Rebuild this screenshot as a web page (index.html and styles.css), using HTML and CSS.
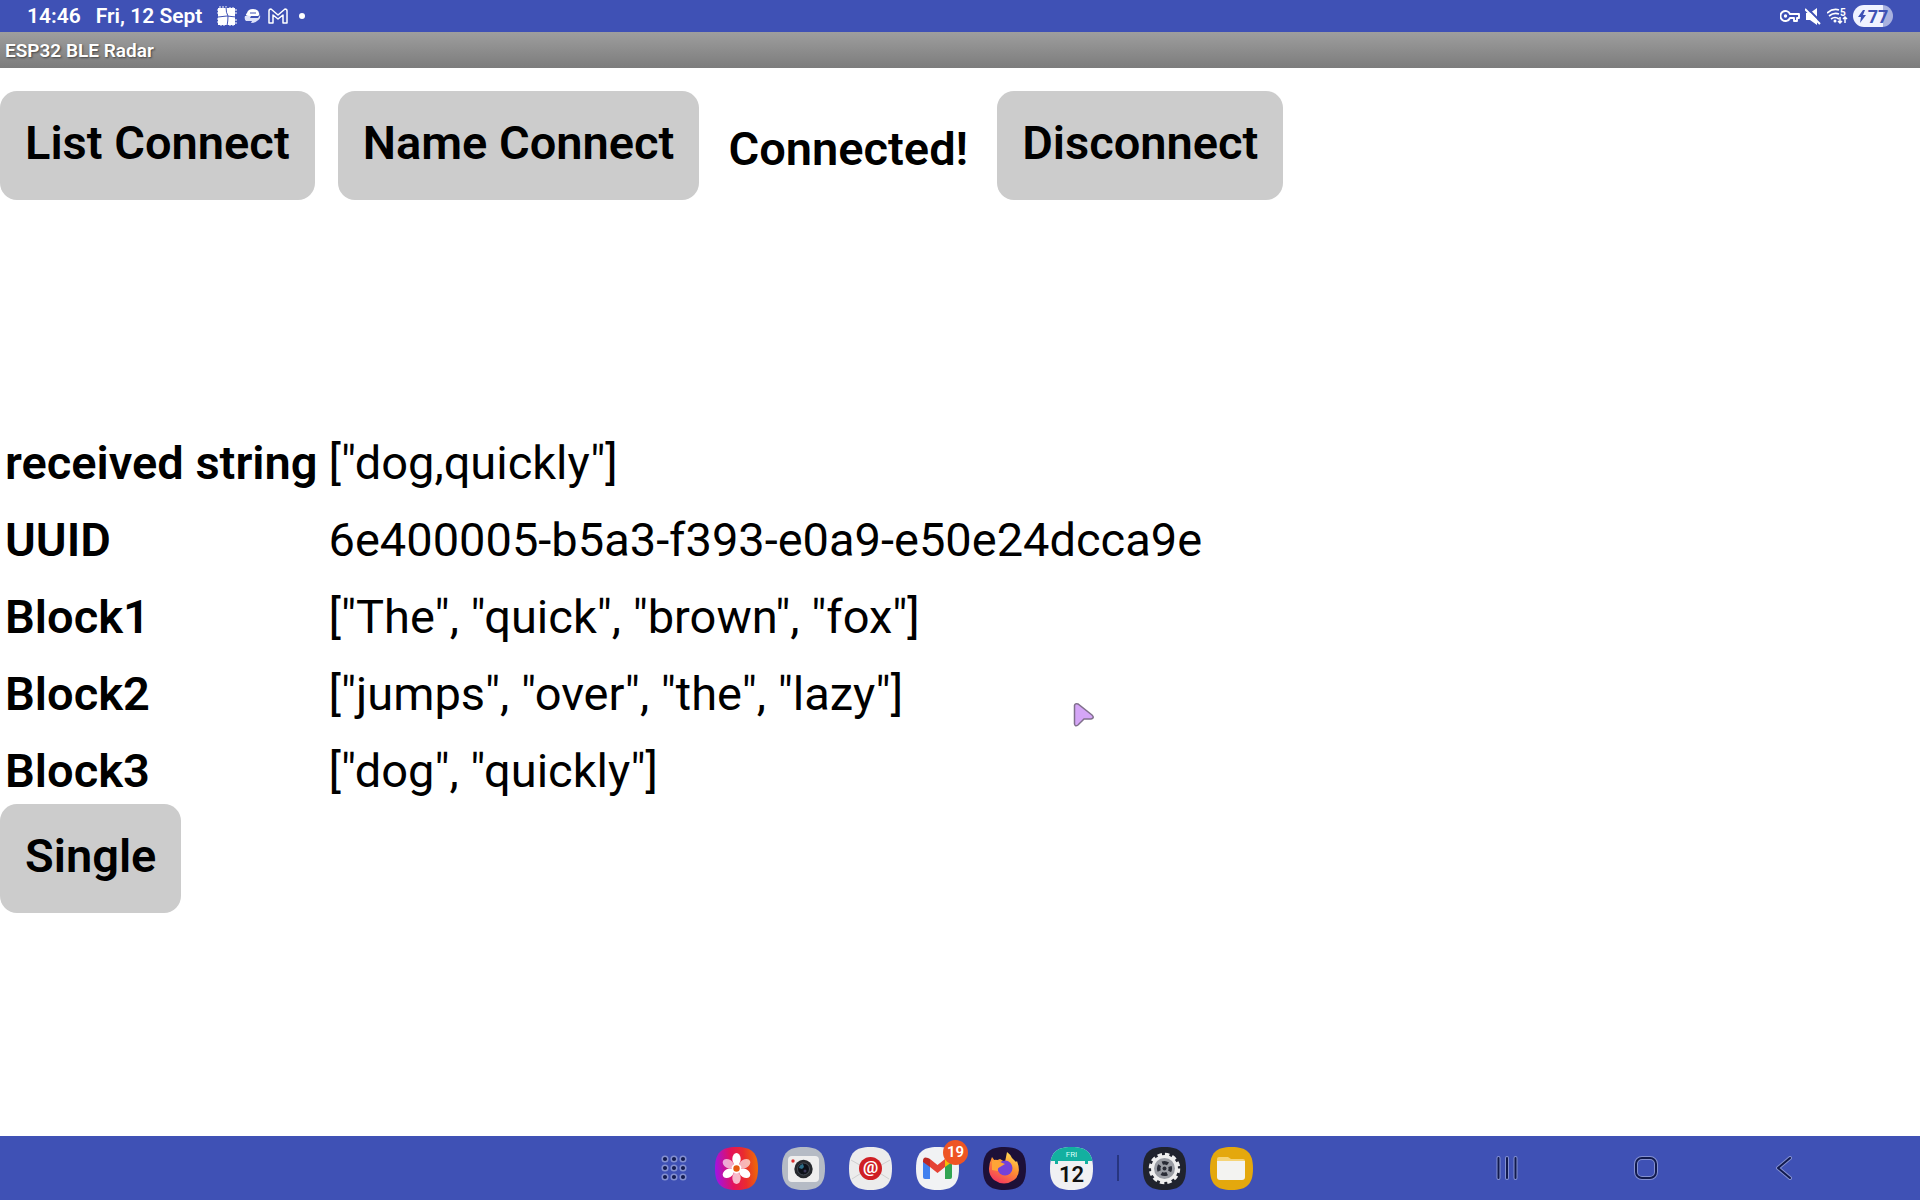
FILE: index.html
```html
<!DOCTYPE html>
<html lang="en">
<head>
  <meta charset="UTF-8">
  <title>ESP32 BLE Radar</title>
  <link rel="stylesheet" href="styles.css">
</head>
<body>

<header class="status-bar">
  <div class="status-left">
    <span class="clock">14:46</span>
    <span class="date">Fri, 12 Sept</span>
    <svg class="icon-grid" width="20" height="20" viewBox="0 0 20 20">
      <path d="M1 2h17v17H1z" fill="#fff"/>
      <path d="M3 0v3M6 0v3M9 0v3M13 1v2M16 1v2M0 4h2M0 7h2M0 13h2M0 16h2M18 4h2M18 7h2M18 14h2M18 17h2M4 18v2M7 18v2M13 18v2M16 18v2" stroke="#fff"/>
      <path d="M9 1q0 6 2 9 0 5-1 10M1 11l9-1 9 1" stroke="#3f51b5" fill="none"/>
    </svg>
    <svg class="icon-cloud" width="17" height="14" viewBox="0 0 17 14">
      <path d="M3 4Q4 0 9 0q5 0 6 4 1 2-1 3H5Q0 7 3 4z" fill="#fff"/>
      <path d="M1 7h6l-1 2h8l2-3q1 4-3 6-2 2-6 2l1-2H2Q0 10 1 7z" fill="#dfe3fa"/>
      <path d="M6 4h6M7 8h6" stroke="#3f51b5"/>
    </svg>
    <svg class="icon-mail" width="20" height="16" viewBox="0 0 20 16">
      <path d="M1 14V3q0-2 2-2l7 6 7-6q2 0 2 2v12h-4V7l-5 4-5-4v8H1z" fill="none" stroke="#fff" stroke-width="1.5" stroke-linejoin="round"/>
    </svg>
    <span class="dot"></span>
  </div>
  <div class="status-right">
    <svg width="20" height="12" viewBox="0 0 20 12">
      <path d="M10 4a5 5 0 1 0 0 4h4v3h3V8h2V4z" fill="none" stroke="#fff" stroke-width="1.9" stroke-linejoin="round"/>
      <circle cx="5.500" cy="6" r="1.700" fill="#fff"/>
    </svg>
    <svg width="17" height="17" viewBox="0 0 17 17">
      <path d="M1 5h4l7-5v17l-7-5H1z" fill="#fff"/>
      <path d="M2 0l15 15" stroke="#3f51b5" stroke-width="2"/>
      <path d="M0 1l15 15" stroke="#fff" stroke-width="2"/>
    </svg>
    <svg width="21" height="17" viewBox="0 0 21 17">
      <g fill="none" stroke="#fff" stroke-width="1.700">
        <path d="M0 5Q6 0 12 2M2 8q5-4 10-2M4 11q4-3 8 0"/>
        <path d="M13 9v6M11 13l2 2 2-2M18 15V9M16 11l2-2 2 2" stroke-width="1.500"/>
      </g>
      <circle cx="8" cy="13" r="1.500" fill="#fff"/>
      <text x="13" y="8" font-size="10" font-weight="700" fill="#fff">5</text>
    </svg>
    <span class="battery">
      <svg width="8" height="13" viewBox="0 0 8 13"><path d="M5 0L0 7h3l-1 6 6-8H5l2-5z" fill="#3f51b5"/></svg>
      77
    </span>
  </div>
</header>

<h1 class="title-bar">ESP32 BLE Radar</h1>

<main class="screen">
  <div class="connect-row">
    <button>List Connect</button>
    <button>Name Connect</button>
    <span class="state">Connected!</span>
    <button>Disconnect</button>
  </div>

  <table class="data">
    <tr><th scope="row">received string</th><td>["dog,quickly"]</td></tr>
    <tr><th scope="row">UUID</th><td>6e400005-b5a3-f393-e0a9-e50e24dcca9e</td></tr>
    <tr><th scope="row">Block1</th><td>["The", "quick", "brown", "fox"]</td></tr>
    <tr><th scope="row">Block2</th><td>["jumps", "over", "the", "lazy"]</td></tr>
    <tr><th scope="row">Block3</th><td>["dog", "quickly"]</td></tr>
  </table>

  <button>Single</button>

  <svg class="pointer" width="22" height="26" viewBox="0 0 22 26">
    <path d="M1.500 3.500Q2 1 5 2l14 11q3 3-1 4h-7l-6 6q-3 2-3.500-1z" fill="#d5a6f7" stroke="#80708c" stroke-width="1.500"/>
  </svg>
</main>

<footer class="taskbar">
  <nav class="dock" aria-label="Apps">
    <button class="all-apps" aria-label="All apps">
      <svg width="26" height="26" viewBox="0 0 26 26">
        <g fill="#141c50" stroke="#8490d0" stroke-width="1.500">
          <circle cx="4" cy="4" r="2.800"/><circle cx="13" cy="4" r="2.800"/><circle cx="22" cy="4" r="2.800"/>
          <circle cx="4" cy="13" r="2.800"/><circle cx="13" cy="13" r="2.800"/><circle cx="22" cy="13" r="2.800"/>
          <circle cx="4" cy="22" r="2.800"/><circle cx="13" cy="22" r="2.800"/><circle cx="22" cy="22" r="2.800"/>
        </g>
      </svg>
    </button>

    <button aria-label="Gallery">
      <svg width="43" height="43" viewBox="0 0 43 43">
        <defs>
          <linearGradient id="gallery" x1="0" y1=".6" x2="1" y2=".5">
            <stop offset="0" stop-color="#a013e8"/><stop offset=".4" stop-color="#e3125c"/>
            <stop offset=".7" stop-color="#ea2c2e"/><stop offset="1" stop-color="#ec6a08"/>
          </linearGradient>
          <path id="tile" d="M21.500 0C37 0 43 6 43 21.500S37 43 21.500 43 0 37 0 21.500 6 0 21.500 0z"/>
        </defs>
        <use href="#tile" fill="url(#gallery)"/>
        <g fill="#fff">
          <ellipse cx="21.500" cy="12" rx="4.200" ry="6"/>
          <ellipse cx="21.500" cy="12" rx="4.200" ry="6" transform="rotate(60 21.500 21.500)" opacity=".65"/>
          <ellipse cx="21.500" cy="12" rx="4.200" ry="6" transform="rotate(120 21.500 21.500)"/>
          <ellipse cx="21.500" cy="12" rx="4.200" ry="6" transform="rotate(180 21.500 21.500)" opacity=".7"/>
          <ellipse cx="21.500" cy="12" rx="4.200" ry="6" transform="rotate(240 21.500 21.500)"/>
          <ellipse cx="21.500" cy="12" rx="4.200" ry="6" transform="rotate(300 21.500 21.500)" opacity=".65"/>
          <circle cx="21.500" cy="21.500" r="5"/>
        </g>
        <circle cx="21.500" cy="21.500" r="3.200" fill="#e55a10"/>
      </svg>
    </button>

    <button aria-label="Camera">
      <svg width="43" height="43" viewBox="0 0 43 43">
        <use href="#tile" fill="#b5bbc5"/>
        <rect x="6" y="9" width="31" height="26" rx="4" fill="#eee"/>
        <circle cx="11" cy="14" r="1.700" fill="#db3030"/>
        <circle cx="21.500" cy="22" r="9.200" fill="#25282d"/>
        <circle cx="21.500" cy="22" r="6" fill="#0c1018" stroke="#464d56"/>
        <path d="M17 21a5 5 0 0 1 4-4l1 3-2 2z" fill="#2c6d88"/>
        <circle cx="23" cy="24" r="1.500" fill="#383556"/>
      </svg>
    </button>

    <button aria-label="Email">
      <svg width="43" height="43" viewBox="0 0 43 43">
        <use href="#tile" fill="#ececec"/>
        <path d="M2 13l14 8M41 13l-14 8M3 32l14-9M40 32l-14-9" stroke="#cfcfcf"/>
        <circle cx="21.500" cy="21.500" r="11.500" fill="#cf1f24"/>
        <text x="21.500" y="26" font-size="17" font-weight="700" text-anchor="middle" fill="#fff">@</text>
      </svg>
    </button>

    <button class="with-badge" aria-label="Gmail">
      <svg width="43" height="43" viewBox="0 0 43 43">
        <use href="#tile" fill="#f1f2f4"/>
        <path d="M7 14l7 5v13H9q-2 0-2-2z" fill="#4080ef"/>
        <path d="M29 19l7-5v16q0 2-2 2h-5z" fill="#31a452"/>
        <path d="M29 12l3-2q4 0 4 4v1l-7 5z" fill="#f8ba08"/>
        <path d="M14 12l7.500 6 7.500-6v8l-7.500 6L14 20z" fill="#e54335"/>
        <path d="M7 15v-1q0-5 5-3l2 1v8z" fill="#bd2822"/>
      </svg>
      <span class="badge">19</span>
    </button>

    <button aria-label="Firefox">
      <svg width="43" height="43" viewBox="0 0 43 43">
        <defs>
          <linearGradient id="fox" x1=".8" y1="0" x2=".3" y2="1">
            <stop offset="0" stop-color="#ffe35a"/><stop offset=".45" stop-color="#ff9430"/><stop offset="1" stop-color="#f53560"/>
          </linearGradient>
        </defs>
        <use href="#tile" fill="#1d1038"/>
        <path d="M9 10l3 4 5-2 5 3 2-10q3 2 5 6l4 4 1-1q5 13-3 19-10 7-20 0Q2 25 9 10z" fill="url(#fox)"/>
        <circle cx="22" cy="21" r="7.500" fill="#7542d8"/>
        <path d="M9 14q5-3 8 1l5 2-5 3q-3 1-2 4l-6-1z" fill="#ffa436"/>
      </svg>
    </button>

    <button aria-label="Calendar">
      <svg width="43" height="43" viewBox="0 0 43 43">
        <clipPath id="tile-clip"><use href="#tile"/></clipPath>
        <g clip-path="url(#tile-clip)">
          <path d="M0 0h43v43H0z" fill="#f0f1f3"/>
          <path d="M0 0h43v14h-5v3h-3v-3H8v3H5v-3H0z" fill="#13b0a0"/>
        </g>
        <text x="21.500" y="10" font-size="8" text-anchor="middle" fill="#d6fff8">FRI</text>
        <text x="21.500" y="35" font-size="22" font-weight="600" text-anchor="middle" fill="#111">12</text>
      </svg>
    </button>

    <span class="divider"></span>

    <button aria-label="Settings">
      <svg width="43" height="43" viewBox="0 0 43 43">
        <use href="#tile" fill="#20232e"/>
        <circle cx="21.500" cy="21.500" r="14" fill="none" stroke="#eee" stroke-width="3.500" stroke-dasharray="4.400 2.930"/>
        <circle cx="21.500" cy="21.500" r="13.500" fill="#eee"/>
        <circle cx="21.500" cy="21.500" r="10.500" fill="#9a9da4"/>
        <circle cx="21.500" cy="21.500" r="5.800" fill="none" stroke="#292c36" stroke-width="3.500" stroke-dasharray="6 3.110" stroke-dashoffset="3"/>
        <circle cx="21.500" cy="21.500" r="2" fill="#292c36"/>
      </svg>
    </button>

    <button aria-label="My Files">
      <svg width="43" height="43" viewBox="0 0 43 43">
        <use href="#tile" fill="#e4a80d"/>
        <path d="M7 17v-5q0-2 2-2h9l3 2h12q2 0 2 2v3z" fill="#f5d477"/>
        <path d="M7 14h28v16q0 3-3 3H10q-3 0-3-3z" fill="#f3f3f1"/>
      </svg>
    </button>
  </nav>

  <nav class="system-keys" aria-label="System">
    <button aria-label="Recents">
      <svg width="24" height="24" viewBox="0 0 24 24">
        <path d="M3.500 2v20M12 2v20M20.500 2v20" class="key-halo"/>
        <path d="M3.500 2v20M12 2v20M20.500 2v20" class="key-line"/>
      </svg>
    </button>
    <button aria-label="Home">
      <svg width="24" height="24" viewBox="0 0 24 24">
        <rect x="2" y="2" width="20" height="20" rx="6" class="key-halo"/>
        <rect x="2" y="2" width="20" height="20" rx="6" class="key-line"/>
      </svg>
    </button>
    <button aria-label="Back">
      <svg width="24" height="24" viewBox="0 0 24 24">
        <path d="M17 2L5 12l12 10" class="key-halo"/>
        <path d="M17 2L5 12l12 10" class="key-line"/>
      </svg>
    </button>
  </nav>
</footer>

</body>
</html>
```
FILE: styles.css
```css
* {
  box-sizing: border-box;
}

body {
  margin: 0;
  min-height: 100vh;
  display: flex;
  flex-direction: column;
  font-family: Roboto, sans-serif;
  background: #fff;
  color: #000;
}

svg {
  display: block;
}

button {
  font-family: inherit;
  border: none;
  cursor: pointer;
}

/* status bar */
.status-bar {
  display: flex;
  justify-content: space-between;
  height: 32px;
  padding: 0 27px;
  background: #3f51b5;
  color: #fff;
}

.status-left,
.status-right {
  display: flex;
  align-items: center;
}

.status-left {
  gap: 7px;
  font-size: 21px;
  font-weight: 600;
}

.date {
  margin: 0 8px;
}

.dot {
  width: 6px;
  height: 6px;
  margin-left: 4px;
  border-radius: 50%;
  background: #fff;
}

.status-right {
  gap: 5px;
}

.battery {
  display: flex;
  align-items: center;
  justify-content: center;
  gap: 2px;
  width: 40px;
  height: 22px;
  border-radius: 11px;
  background: linear-gradient(to right, #f0f2ff 75%, #a9b1df 75%);
  color: #3f51b5;
  font-size: 18px;
  font-weight: 700;
}

.title-bar {
  margin: 0;
  height: 36px;
  padding: 2px 5px 0;
  background: linear-gradient(#9e9e9e, #7c7c7c);
  color: #fff;
  font-size: 19px;
  font-weight: 600;
  line-height: 34px;
  text-shadow: 1px 1px 2px #444;
}

/* app screen */
.screen {
  position: relative;
  flex: 1;
  padding-top: 23px;
  font-size: 47px;
  line-height: 56px;
}

.screen button {
  padding: 24px 25px 29px;
  border-radius: 17px;
  background: #ccc;
  color: #000;
  font-size: 47px;
  font-weight: 600;
  line-height: 56px;
}

.connect-row {
  display: flex;
  align-items: center;
  gap: 23px;
}

.state {
  padding: 6px 6px 0;
  font-weight: 600;
}

.data {
  margin-top: 219px;
  border-collapse: collapse;
}

.data th,
.data td {
  padding: 16px 6px 5px 5px;
  text-align: left;
}

.data th {
  font-weight: 600;
}

.pointer {
  position: absolute;
  left: 1073px;
  top: 634px;
}

/* bottom bar */
.taskbar {
  display: grid;
  grid-template-columns: 1fr auto 1fr;
  align-items: center;
  height: 64px;
  background: #3f51b5;
}

.taskbar button {
  padding: 0;
  background: none;
}

.dock {
  grid-column: 2;
  display: flex;
  align-items: center;
  gap: 24px;
  padding-right: 6px;
}

.all-apps {
  width: 30px;
}

.divider {
  width: 2px;
  height: 26px;
  background: #27357f;
}

.with-badge {
  position: relative;
}

.badge {
  position: absolute;
  top: -7px;
  right: -9px;
  width: 25px;
  height: 25px;
  border-radius: 50%;
  background: #ee5524;
  color: #fff;
  font-size: 15px;
  font-weight: 600;
  line-height: 25px;
  text-align: center;
}

.system-keys {
  display: flex;
  justify-content: flex-end;
  padding-right: 66px;
}

.system-keys button {
  display: flex;
  justify-content: center;
  width: 139px;
}

.key-halo,
.key-line {
  fill: none;
  stroke-linecap: round;
  stroke-linejoin: round;
}

.key-halo {
  stroke: #8490d0;
  stroke-width: 4px;
}

.key-line {
  stroke: #111a4d;
  stroke-width: 2px;
}
```
